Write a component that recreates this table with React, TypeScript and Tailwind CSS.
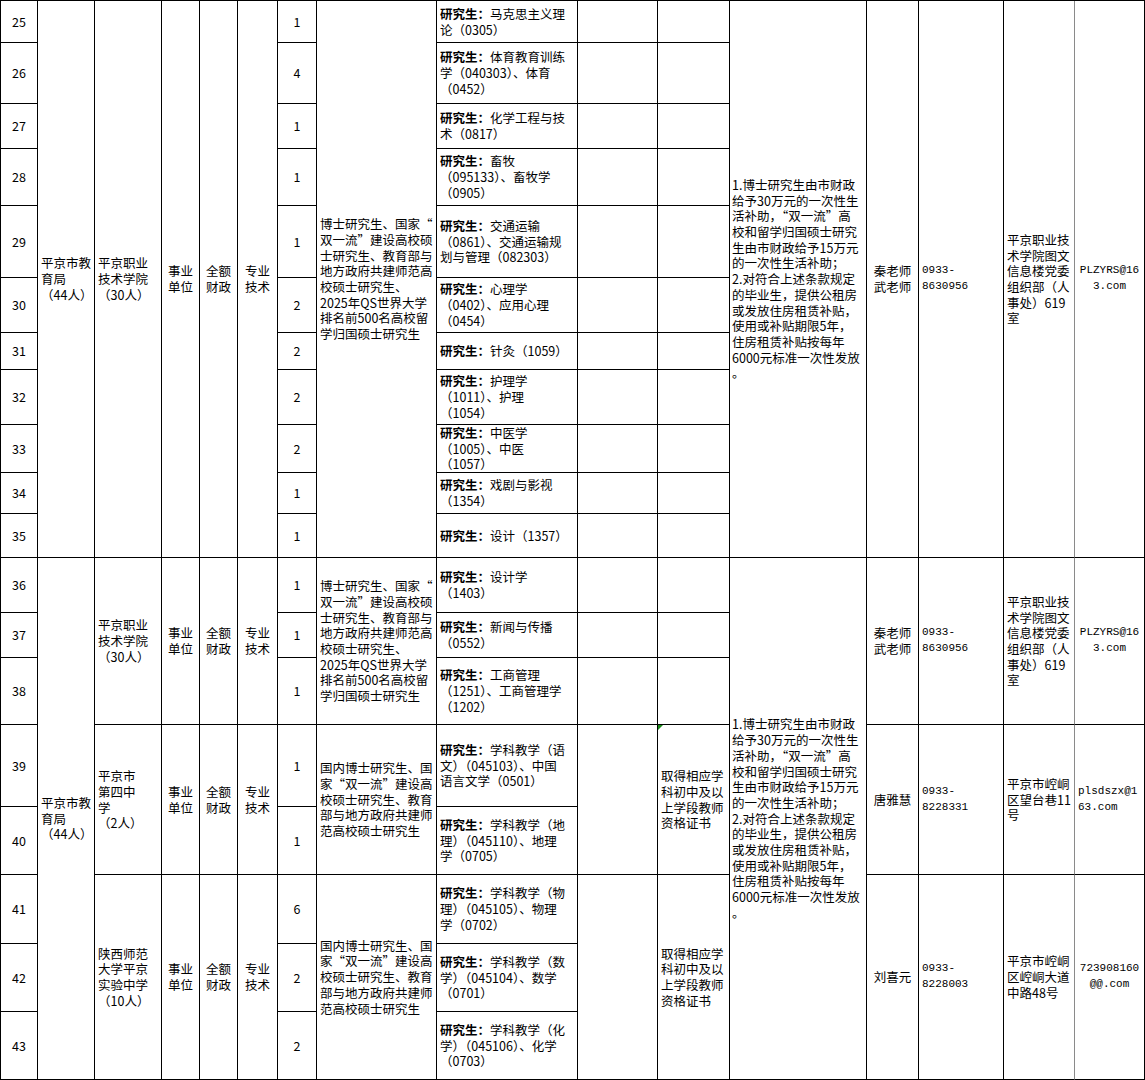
import React from "react";

const RS = [
  "row-start-1",
  "row-start-2",
  "row-start-3",
  "row-start-4",
  "row-start-5",
  "row-start-6",
  "row-start-7",
  "row-start-8",
  "row-start-9",
  "row-start-10",
  "row-start-11",
  "row-start-12",
  "row-start-13",
  "row-start-14",
  "row-start-15",
  "row-start-16",
  "row-start-17",
  "row-start-18",
  "row-start-19",
];

function Cell({
  pos,
  cls = "",
  children,
}: {
  pos: string;
  cls?: string;
  children?: React.ReactNode;
}) {
  return (
    <div
      className={`${pos} relative flex flex-col justify-center border-r border-b border-black bg-white ${cls}`}
    >
      {children}
    </div>
  );
}

function Lines({ lines }: { lines: string[] }) {
  return (
    <>
      {lines.map((l, i) => (
        <div key={i} className="whitespace-nowrap">
          {l}
        </div>
      ))}
    </>
  );
}

const EDU1 = [
  "博士研究生、国家“",
  "双一流”建设高校硕",
  "士研究生、教育部与",
  "地方政府共建师范高",
  "校硕士研究生、",
  "2025年QS世界大学",
  "排名前500名高校留",
  "学归国硕士研究生",
];

const EDU2 = [
  "国内博士研究生、国",
  "家“双一流”建设高",
  "校硕士研究生、教育",
  "部与地方政府共建师",
  "范高校硕士研究生",
];

const BENEFITS = [
  "1.博士研究生由市财政",
  "给予30万元的一次性生",
  "活补助，“双一流”高",
  "校和留学归国硕士研究",
  "生由市财政给予15万元",
  "的一次性生活补助；",
  "2.对符合上述条款规定",
  "的毕业生，提供公租房",
  "或发放住房租赁补贴，",
  "使用或补贴期限5年，",
  "住房租赁补贴按每年",
  "6000元标准一次性发放",
  "。",
];

const CERT = ["取得相应学", "科初中及以", "上学段教师", "资格证书"];

const COUNTS = ["1", "4", "1", "1", "1", "2", "2", "2", "2", "1", "1", "1", "1", "1", "1", "1", "6", "2", "2"];

const MAJORS: [string, string[]][] = [
  ["马克思主义理", ["论（0305）"]],
  ["体育教育训练", ["学（040303）、体育", "（0452）"]],
  ["化学工程与技", ["术（0817）"]],
  ["畜牧", ["（095133）、畜牧学", "（0905）"]],
  ["交通运输", ["（0861）、交通运输规", "划与管理（082303）"]],
  ["心理学", ["（0402）、应用心理", "（0454）"]],
  ["针灸（1059）", []],
  ["护理学", ["（1011）、护理", "（1054）"]],
  ["中医学", ["（1005）、中医", "（1057）"]],
  ["戏剧与影视", ["（1354）"]],
  ["设计（1357）", []],
  ["设计学", ["（1403）"]],
  ["新闻与传播", ["（0552）"]],
  ["工商管理", ["（1251）、工商管理学", "（1202）"]],
  ["学科教学（语", ["文）（045103）、中国", "语言文学（0501）"]],
  ["学科教学（地", ["理）（045110）、地理", "学（0705）"]],
  ["学科教学（物", ["理）（045105）、物理", "学（0702）"]],
  ["学科教学（数", ["学）（045104）、数学", "（0701）"]],
  ["学科教学（化", ["学）（045106）、化学", "（0703）"]],
];

type Group = {
  span: string;
  employer: string[];
  edu: string[];
  contact: string[];
  phone: string[];
  addr: string[];
  email: string[];
  emailCenter: boolean;
};

const GROUPS: Group[] = [
  {
    span: "row-start-1 row-span-11",
    employer: ["平京职业", "技术学院", "（30人）"],
    edu: EDU1,
    contact: ["秦老师", "武老师"],
    phone: ["0933-", "8630956"],
    addr: ["平京职业技", "术学院图文", "信息楼党委", "组织部（人", "事处）619", "室"],
    email: ["PLZYRS@16", "3.com"],
    emailCenter: true,
  },
  {
    span: "row-start-12 row-span-3",
    employer: ["平京职业", "技术学院", "（30人）"],
    edu: EDU1,
    contact: ["秦老师", "武老师"],
    phone: ["0933-", "8630956"],
    addr: ["平京职业技", "术学院图文", "信息楼党委", "组织部（人", "事处）619", "室"],
    email: ["PLZYRS@16", "3.com"],
    emailCenter: true,
  },
  {
    span: "row-start-15 row-span-2",
    employer: ["平京市", "第四中", "学", "（2人）"],
    edu: EDU2,
    contact: ["唐雅慧"],
    phone: ["0933-", "8228331"],
    addr: ["平京市崆峒", "区望台巷11", "号"],
    email: ["plsdszx@1", "63.com"],
    emailCenter: false,
  },
  {
    span: "row-start-17 row-span-3",
    employer: ["陕西师范", "大学平京", "实验中学", "（10人）"],
    edu: EDU2,
    contact: ["刘喜元"],
    phone: ["0933-", "8228003"],
    addr: ["平京市崆峒", "区崆峒大道", "中路48号"],
    email: ["723908160", "@@.com"],
    emailCenter: true,
  },
];

export default function App() {
  return (
    <div className="w-[1145px] h-[1080px] overflow-hidden bg-white text-black font-['Noto_Sans_CJK_SC',sans-serif] text-[12.5px] leading-[15.7px]">
      <div className="grid w-[1145px] border-l border-t border-black grid-cols-[37px_57px_67px_38px_38px_40px_39px_120px_141px_80px_72px_137px_52px_85px_71px_70px] grid-rows-[42px_61px_45px_57px_72px_55px_37px_55px_48px_41px_44px_55px_45px_67px_82px_68px_69px_68px_68px]">
        {/* row numbers */}
        {RS.map((r, i) => (
          <Cell key={`n${i}`} pos={`col-start-1 ${r}`} cls="items-center">
            {25 + i}
          </Cell>
        ))}

        {/* competent department */}
        <Cell pos="col-start-2 row-start-1 row-span-11" cls="items-start pl-[3px]">
          <Lines lines={["平京市教", "育局", "（44人）"]} />
        </Cell>
        <Cell pos="col-start-2 row-start-12 row-span-8" cls="items-start pl-[3px]">
          <Lines lines={["平京市教", "育局", "（44人）"]} />
        </Cell>

        {GROUPS.map((g, gi) => (
          <React.Fragment key={`g${gi}`}>
            <Cell pos={`col-start-3 ${g.span}`} cls="items-start pl-[3px]">
              <Lines lines={g.employer} />
            </Cell>
            <Cell pos={`col-start-4 ${g.span}`} cls="items-center">
              <Lines lines={["事业", "单位"]} />
            </Cell>
            <Cell pos={`col-start-5 ${g.span}`} cls="items-center">
              <Lines lines={["全额", "财政"]} />
            </Cell>
            <Cell pos={`col-start-6 ${g.span}`} cls="items-center">
              <Lines lines={["专业", "技术"]} />
            </Cell>
            <Cell pos={`col-start-8 ${g.span}`} cls="items-start pl-[3px]">
              <Lines lines={g.edu} />
            </Cell>
            <Cell pos={`col-start-13 ${g.span}`} cls="items-center">
              <Lines lines={g.contact} />
            </Cell>
            <Cell pos={`col-start-14 ${g.span}`} cls="items-start pl-[3px] font-['Liberation_Mono',monospace] text-[11px]">
              <Lines lines={g.phone} />
            </Cell>
            <Cell pos={`col-start-15 ${g.span}`} cls="items-start pl-[3px] border-r-[#8a8a8a]">
              <Lines lines={g.addr} />
            </Cell>
            <Cell
              pos={`col-start-16 ${g.span}`}
              cls={`${g.emailCenter ? "items-center" : "items-start pl-[3px]"} font-['Liberation_Mono',monospace] text-[11px]`}
            >
              <Lines lines={g.email} />
            </Cell>
          </React.Fragment>
        ))}

        {/* counts */}
        {RS.map((r, i) => (
          <Cell key={`c${i}`} pos={`col-start-7 ${r}`} cls="items-center">
            {COUNTS[i]}
          </Cell>
        ))}

        {/* majors */}
        {RS.map((r, i) => (
          <Cell key={`m${i}`} pos={`col-start-9 ${r}`} cls="items-start pl-[3px]">
            <div className="whitespace-nowrap">
              <span className="font-bold">研究生：</span>
              {MAJORS[i][0]}
            </div>
            <Lines lines={MAJORS[i][1]} />
          </Cell>
        ))}

        {/* blank + certificate columns for rows 25-38 */}
        {RS.slice(0, 14).map((r, i) => (
          <React.Fragment key={`b${i}`}>
            <Cell pos={`col-start-10 ${r}`} />
            <Cell pos={`col-start-11 ${r}`} />
          </React.Fragment>
        ))}
        <Cell pos="col-start-10 row-start-15 row-span-2" />
        <Cell pos="col-start-10 row-start-17 row-span-3" />
        <Cell pos="col-start-11 row-start-15 row-span-2" cls="items-start pl-[3px]">
          <span className="absolute left-0 top-0 h-0 w-0 border-t-[5px] border-r-[5px] border-t-[#1a8a1a] border-r-transparent" />
          <Lines lines={CERT} />
        </Cell>
        <Cell pos="col-start-11 row-start-17 row-span-3" cls="items-start pl-[3px]">
          <Lines lines={CERT} />
        </Cell>

        {/* benefits */}
        <Cell pos="col-start-12 row-start-1 row-span-11" cls="items-start pl-[2px]">
          <Lines lines={BENEFITS} />
        </Cell>
        <Cell pos="col-start-12 row-start-12 row-span-8" cls="items-start pl-[2px]">
          <Lines lines={BENEFITS} />
        </Cell>
      </div>
    </div>
  );
}
